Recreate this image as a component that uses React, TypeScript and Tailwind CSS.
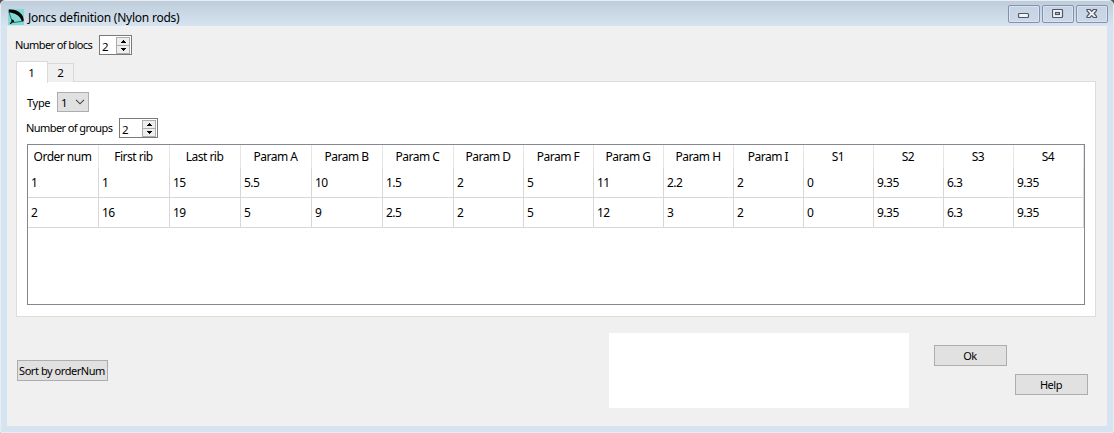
import React from "react";

const columns = [
  "Order num", "First rib", "Last rib", "Param A", "Param B", "Param C", "Param D", "Param F",
  "Param G", "Param H", "Param I", "S1", "S2", "S3", "S4",
];

const rows = [
  ["1", "1", "15", "5.5", "10", "1.5", "2", "5", "11", "2.2", "2", "0", "9.35", "6.3", "9.35"],
  ["2", "16", "19", "5", "9", "2.5", "2", "5", "12", "3", "2", "0", "9.35", "6.3", "9.35"],
];

function ParagliderIcon() {
  return (
    <svg width="16" height="16" viewBox="0 0 16 16" className="mt-[8px] shrink-0">
      <rect width="16" height="16" fill="#7fdcd4" />
      <path d="M0.8 0.6C5 0.2 10.3 1.3 13.3 5C15.2 7.3 16 10 15.6 12.2L13.9 12.4C13 9.3 11 6.8 7.8 5.2C5.5 4.1 3 3.6 0.8 3.6Z" fill="#000" />
      <path d="M1.2 3.5L3.6 11.2M5 13.6L14.6 12.2" stroke="#234" strokeWidth="0.7" fill="none" />
      <path d="M3.4 10.6L5.2 10.8L6.4 12.6L4.6 13.6L2.4 15.2L1.8 14.4L3.4 12.8Z" fill="#000" />
    </svg>
  );
}

function CaptionButton({ label, children }: { label: string; children: React.ReactNode }) {
  return (
    <button
      aria-label={label}
      className="flex h-[18px] w-8 justify-center rounded-[2px] border border-[#8490ae] bg-linear-to-b from-[#c6d3e2] to-[#cbd9e9] pt-[3px] shadow-[inset_0_0_0_1px_#d9e4f0]"
    >
      <svg width="12" height="10" viewBox="0 0 12 10">{children}</svg>
    </button>
  );
}

function SpinBox({ value, className }: { value: string; className: string }) {
  return (
    <div className={`flex h-5 justify-between border border-[#7a7a7a] bg-white py-px pr-px pl-[2px] ${className}`}>
      <span className="pt-[2px] text-[11.5px] leading-4">{value}</span>
      <div className="flex w-[14px] flex-col">
        {["M0 3h5v-1h-1v-1h-1v-1h-1v1h-1v1h-1z", "M0 0h5v1h-1v1h-1v1h-1v-1h-1v-1h-1z"].map((d) => (
          <button key={d} className="-mb-px flex h-[9px] items-center justify-center border border-[#acacac] bg-[#eeeeee]">
            <svg width="5" height="3" viewBox="0 0 5 3" shapeRendering="crispEdges"><path d={d} fill="#000" /></svg>
          </button>
        ))}
      </div>
    </div>
  );
}

function PushButton({ children, className }: { children: string; className: string }) {
  return (
    <button className={`flex h-[21px] items-center justify-center border border-[#adadad] bg-[#e1e1e1] pt-px pr-px text-[11px] tracking-[-0.45px] whitespace-nowrap ${className}`}>
      {children}
    </button>
  );
}

export default function App() {
  return (
    <div className="h-[433px] w-[1114px] bg-[#555]">
      <div className="flex h-full flex-col overflow-hidden rounded-t-[5px] border border-[#e6edf5] bg-[#d6e4f1] px-[6px] pb-[6px] font-['Noto_Sans','Open_Sans',sans-serif] text-[11px] text-black">
        <header className="-mx-[6px] flex h-[25px] shrink-0 bg-linear-to-b from-[#bfcddb] to-[#d6e4f1] pr-[5px] pl-[7px]">
          <ParagliderIcon />
          <span className="mt-[9px] ml-[4px] text-[12px] leading-4 tracking-[-0.23px] whitespace-nowrap">Joncs definition (Nylon rods)</span>
          <div className="mt-[4px] ml-auto flex gap-[2px]">
            <CaptionButton label="Minimize">
              <rect x="0.5" y="4.5" width="10" height="4" rx="1" fill="#f4f4f4" stroke="#50566a" strokeWidth="1.2" />
            </CaptionButton>
            <CaptionButton label="Maximize">
              <rect x="0.5" y="0.5" width="10" height="8" rx="1" fill="#f4f4f4" stroke="#50566a" strokeWidth="1.2" />
              <rect x="3.5" y="3.5" width="4" height="2" fill="#c6d3e2" stroke="#50566a" strokeWidth="1.2" />
            </CaptionButton>
            <CaptionButton label="Close">
              <path d="M1 .5H4L5.75 2.3L7.5 .5H10.5V1.7L8 4.5L10.5 7.3V8.5H7.5L5.75 6.7L4 8.5H1V7.3L3.5 4.5L1 1.7Z" fill="#f4f4f4" stroke="#50566a" strokeWidth="1.2" />
            </CaptionButton>
          </div>
        </header>

        <main className="min-h-0 flex-1 bg-[#f0f0f0] pt-[9px] pr-[11px] pl-[9px]">
          <div className="flex h-5">
            <span className="ml-[-1px] w-[84px] pt-[2px] leading-4 tracking-[-0.58px] whitespace-nowrap">Number of blocs</span>
            <SpinBox value="2" className="w-[33px]" />
          </div>

          <div className="relative z-10 mt-[6px] flex h-[21px] items-end">
            <button className="-mb-px h-[22px] w-8 border border-b-0 border-[#d9d9d9] bg-white pr-px text-[11.5px] leading-5">1</button>
            <button className="-ml-px h-[19px] w-[27px] border border-b-0 border-[#d9d9d9] bg-[#f0f0f0] text-[11.5px] leading-[18px]">2</button>
          </div>

          <section className="mt-[-1px] h-[236px] border border-[#dcdcdc] bg-white pt-[10px] pr-[10px] pl-[10px]">
            <div className="flex h-5">
              <span className="w-[30px] pt-[3px] leading-4 tracking-[-0.3px]">Type</span>
              <div className="flex h-5 w-8 items-center justify-between border border-[#adadad] bg-[#e1e1e1] pr-[3px] pl-[3px] text-[11.5px]">
                <span className="pt-px">1</span>
                <svg width="10" height="6" viewBox="0 0 10 6"><path d="M1 .8L5 4.8L9 .8" fill="none" stroke="#444" strokeWidth="1.1" /></svg>
              </div>
            </div>
            <div className="mt-[6px] flex h-5">
              <span className="ml-[-1px] w-[93px] pt-[2px] leading-4 tracking-[-0.58px] whitespace-nowrap">Number of groups</span>
              <SpinBox value="2" className="w-[39px]" />
            </div>

            <div className="mt-[6px] h-[161px] border border-[#828790]">
              <table className="w-[1056px] table-fixed border-separate border-spacing-0 text-[12px]">
                <colgroup>
                  {columns.map((name, i) => <col key={name} className={i < 6 ? "w-[71px]" : "w-[70px]"} />)}
                </colgroup>
                <thead>
                  <tr className="h-[23px]">
                    {columns.map((name) => (
                      <th key={name} className="h-[23px] border-r border-[#e5e5e5] p-0 pr-px text-center leading-[23px] font-normal tracking-[-0.5px] whitespace-nowrap">{name}</th>
                    ))}
                  </tr>
                </thead>
                <tbody>
                  {rows.map((row) => (
                    <tr key={row[0]} className="h-[30px]">
                      {row.map((cell, i) => (
                        <td key={i} className="h-[30px] border-r border-b border-[#d8d8d8] p-0 pl-[3px] leading-[29px] tracking-[-0.5px]">{cell}</td>
                      ))}
                    </tr>
                  ))}
                </tbody>
              </table>
            </div>
          </section>

          <footer className="flex h-[90px] items-start pt-[16px]">
            <PushButton className="mt-[27px] ml-px w-[91px]">Sort by orderNum</PushButton>
            <div className="ml-[501px] h-[75px] w-[300px] bg-white" />
            <PushButton className="mt-[12px] ml-[25px] w-[73px]">Ok</PushButton>
            <PushButton className="mt-[41px] ml-[8px] w-[73px]">Help</PushButton>
          </footer>
        </main>
      </div>
    </div>
  );
}
